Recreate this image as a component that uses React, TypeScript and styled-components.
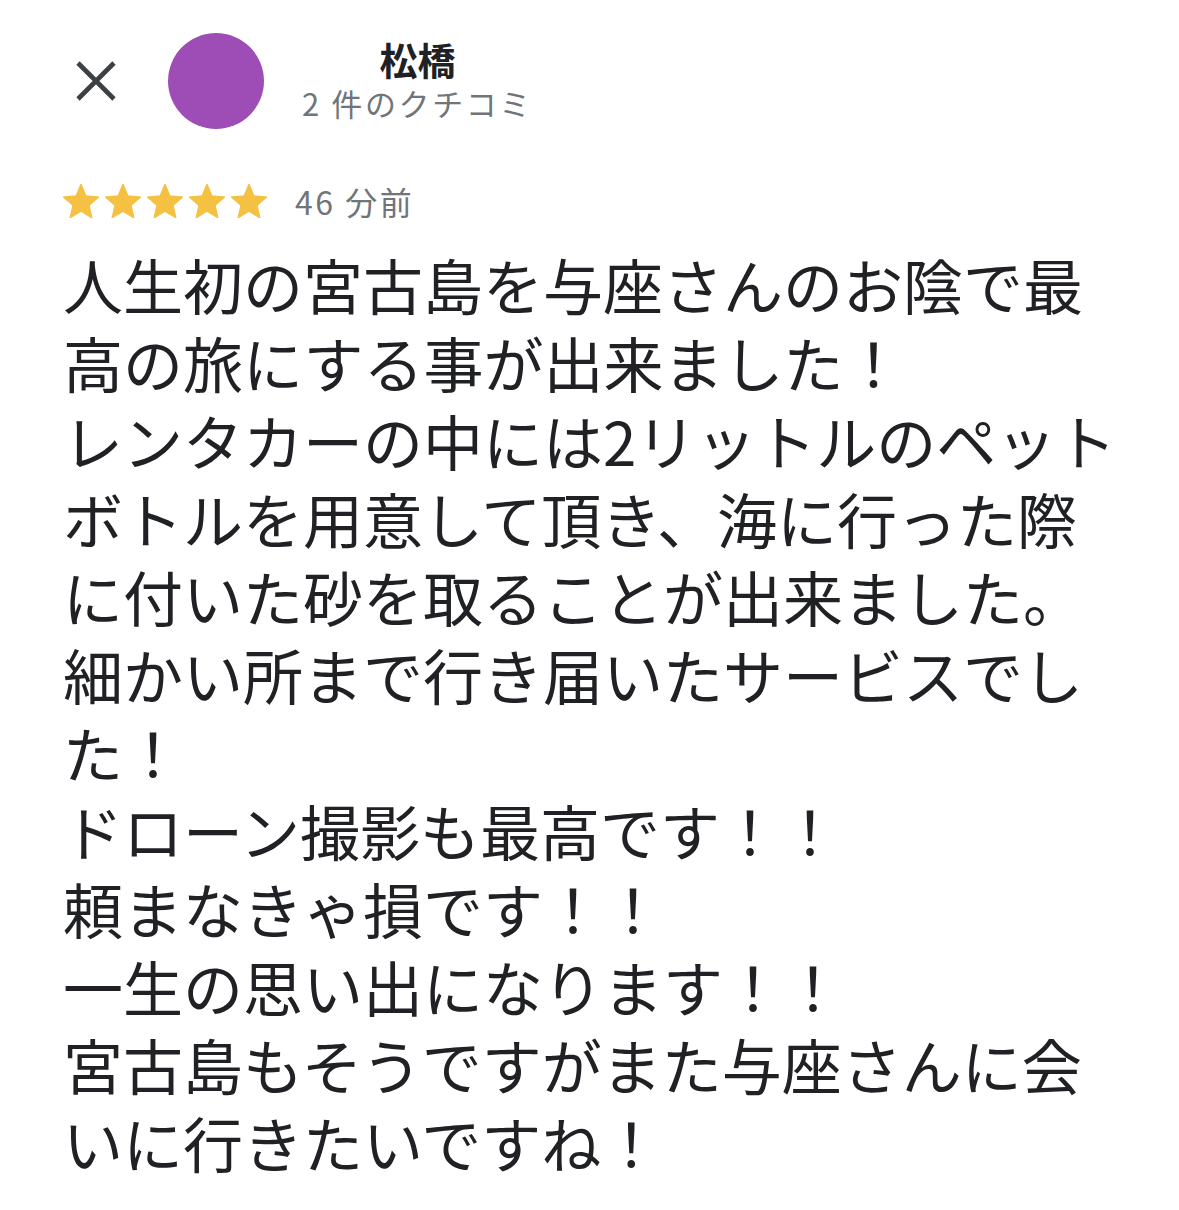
import styled, { createGlobalStyle } from 'styled-components';

const REVIEW_TEXT = [
  '人生初の宮古島を与座さんのお陰で最高の旅にする事が出来ました！',
  'レンタカーの中には2リットルのペットボトルを用意して頂き、海に行った際に付いた砂を取ることが出来ました。',
  '細かい所まで行き届いたサービスでした！',
  'ドローン撮影も最高です！！',
  '頼まなきゃ損です！！',
  '一生の思い出になります！！',
  '宮古島もそうですがまた与座さんに会いに行きたいですね！',
];

const STAR_PATH = 'M12 17.27L18.18 21l-1.64-7.03L22 9.24l-7.19-.61L12 2 9.19 8.63 2 9.24l5.46 4.73L5.82 21z';

export default function App() {
  return (
    <>
      <GlobalStyle />
      <Page lang="ja">
        <Header>
          <CloseButton aria-label="閉じる">
            <svg width="42" height="42" viewBox="0 0 42 42">
              <path d="M3 3L39 39M39 3L3 39" stroke="#3c4043" strokeWidth="4.6" fill="none" />
            </svg>
          </CloseButton>
          <Avatar />
          <Author>
            <AuthorName>松橋</AuthorName>
            <ReviewCount>2 件のクチコミ</ReviewCount>
          </Author>
        </Header>

        <RatingRow>
          <Stars>
            {[0, 1, 2, 3, 4].map((i) => (
              <svg key={i} width="36" height="34" viewBox="2 2 20 19">
                <path d={STAR_PATH} fill="#f4c142" stroke="#f4c142" strokeWidth="0.6" strokeLinejoin="round" />
              </svg>
            ))}
          </Stars>
          <TimeAgo>46 分前</TimeAgo>
        </RatingRow>

        <ReviewBody>
          {REVIEW_TEXT.map((line) => (
            <p key={line}>{line}</p>
          ))}
        </ReviewBody>
      </Page>
    </>
  );
}

const GlobalStyle = createGlobalStyle`
  html, body {
    margin: 0;
    padding: 0;
    background: #ffffff;
  }
  body {
    font-family: "Noto Sans CJK JP", "Noto Sans", sans-serif;
    color: #202124;
  }
`;

const Page = styled.div`
  width: 1179px;
  min-height: 1210px;
  box-sizing: border-box;
  padding: 33px 50px 0 63px;
  background: #ffffff;
`;

const Header = styled.div`
  display: flex;
  align-items: center;
  padding-left: 12px;
`;

const CloseButton = styled.div`
  width: 42px;
  height: 42px;
  display: flex;
  align-items: center;
  justify-content: center;
`;

const Avatar = styled.div`
  width: 96px;
  height: 96px;
  border-radius: 50%;
  background: #9d4db5;
  margin-left: 51px;
  flex-shrink: 0;
`;

const Author = styled.div`
  display: flex;
  flex-direction: column;
  align-items: center;
  margin-left: 38px;
`;

const AuthorName = styled.div`
  font-size: 38px;
  font-weight: 700;
  line-height: 44px;
  color: #202124;
`;

const ReviewCount = styled.div`
  font-size: 31px;
  line-height: 44px;
  letter-spacing: 2.6px;
  color: #70757a;
`;

const RatingRow = styled.div`
  display: flex;
  align-items: center;
  height: 40px;
  margin-top: 52px;
`;

const Stars = styled.div`
  display: flex;
  gap: 6px;
  svg {
    display: block;
  }
`;

const TimeAgo = styled.div`
  margin-left: 28px;
  font-size: 32px;
  letter-spacing: 2.5px;
  color: #70757a;
`;

const ReviewBody = styled.div`
  margin-top: 24px;
  font-size: 60px;
  line-height: 78px;
  color: #202124;

  p {
    margin: 0;
  }
`;
